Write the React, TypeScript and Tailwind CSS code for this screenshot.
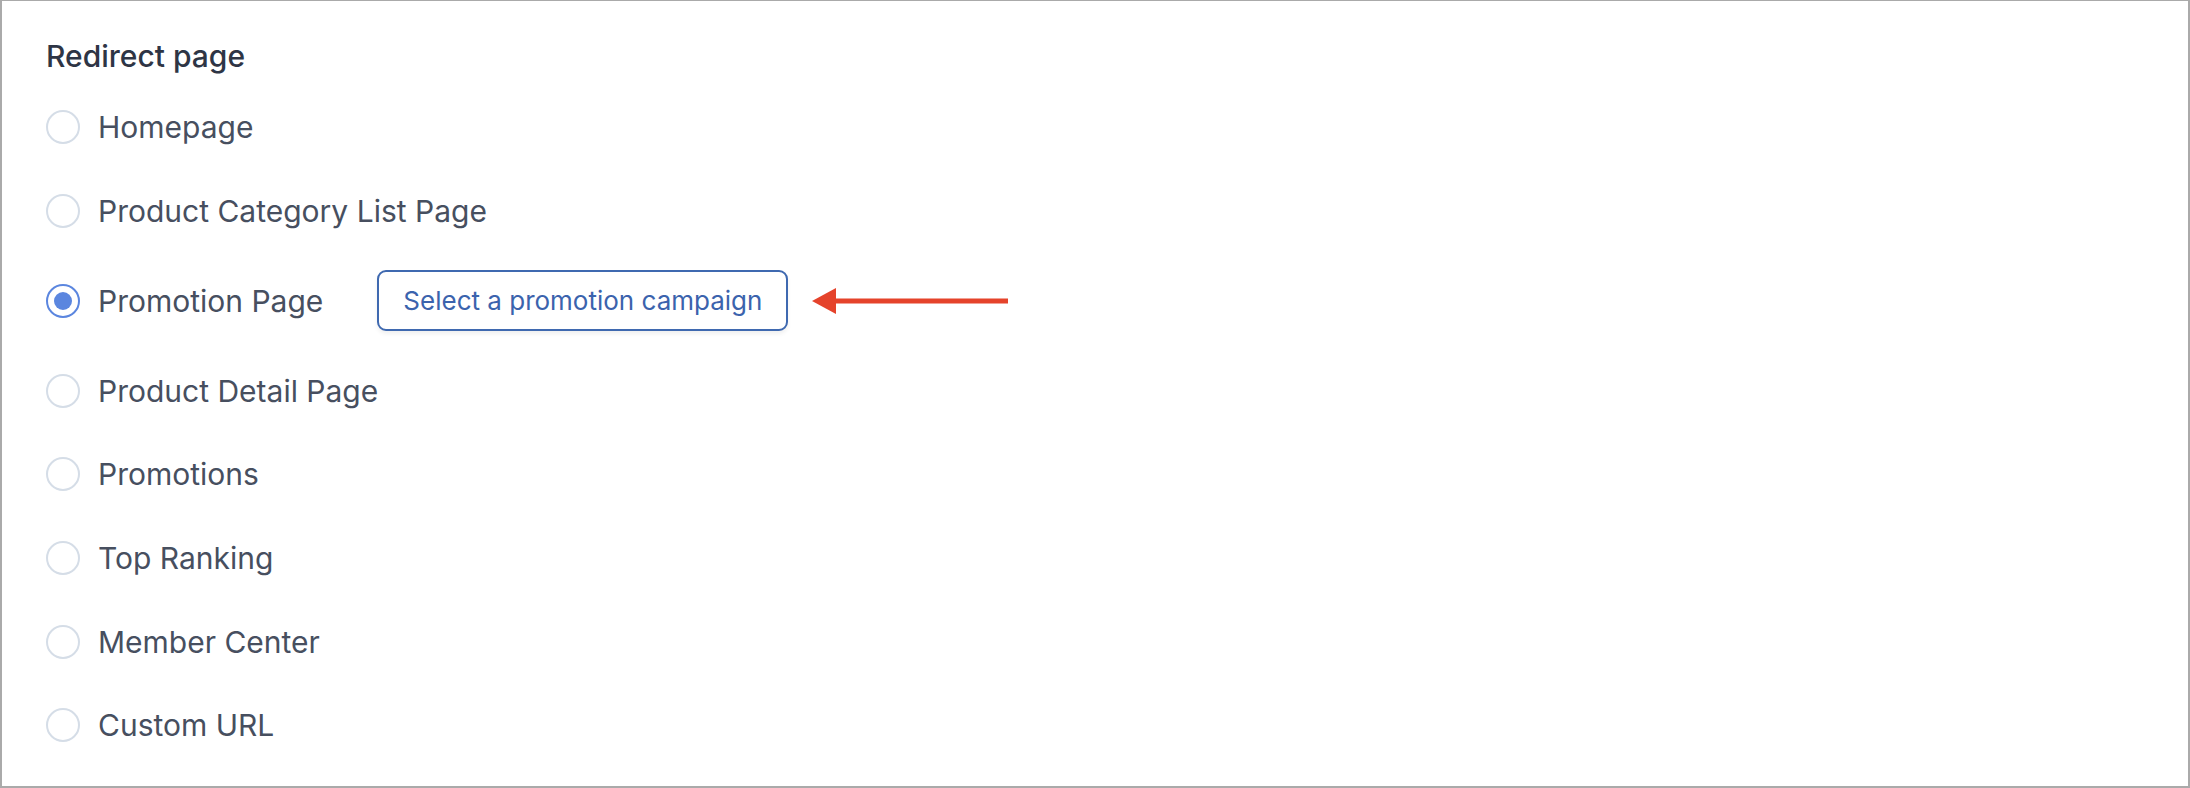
const options = [
  "Homepage",
  "Product Category List Page",
  "Promotion Page",
  "Product Detail Page",
  "Promotions",
  "Top Ranking",
  "Member Center",
  "Custom URL",
];

function Radio({ checked }: { checked: boolean }) {
  return checked ? (
    <span className="flex h-[34px] w-[34px] shrink-0 items-center justify-center rounded-full border-2 border-[#5b86df]">
      <span className="h-[18px] w-[18px] rounded-full bg-[#5b86df]" />
    </span>
  ) : (
    <span className="h-[34px] w-[34px] shrink-0 rounded-full border-2 border-[#d5dde7] bg-white" />
  );
}

export default function App() {
  const selected = "Promotion Page";

  return (
    <div
      className="h-[788px] w-full border-t border-x-2 border-b-2 border-[#aaaaaa] bg-white pl-[44px] pt-[35px]"
      style={{ fontFamily: "Inter, 'Noto Sans', sans-serif" }}
    >
      <h2 className="mb-[27px] text-[30px] font-medium leading-[40px] text-[#2e3545]">
        Redirect page
      </h2>

      <div className="flex flex-col gap-[35.6px]">
        {options.map((label) => (
          <div key={label} className="flex min-h-[48px] items-center">
            <label className="flex items-center gap-[18px]">
              <Radio checked={label === selected} />
              <span className="text-[30px] leading-[40px] text-[#474f5f]">{label}</span>
            </label>

            {label === selected && (
              <>
                <button className="ml-[54px] h-[61px] rounded-[9px] border-2 border-[#3f69b0] bg-white px-[24px] text-[26px] text-[#3b63ad] shadow-[0_3px_4px_rgba(0,0,0,0.06)]">
                  Select a promotion campaign
                </button>
                {/* red pointer */}
                <svg className="ml-[24px]" width="196" height="26" viewBox="0 0 196 26">
                  <polygon points="0,13 24,0 24,26" fill="#e5432b" />
                  <rect x="22" y="10.5" width="174" height="5" fill="#e5432b" />
                </svg>
              </>
            )}
          </div>
        ))}
      </div>
    </div>
  );
}
